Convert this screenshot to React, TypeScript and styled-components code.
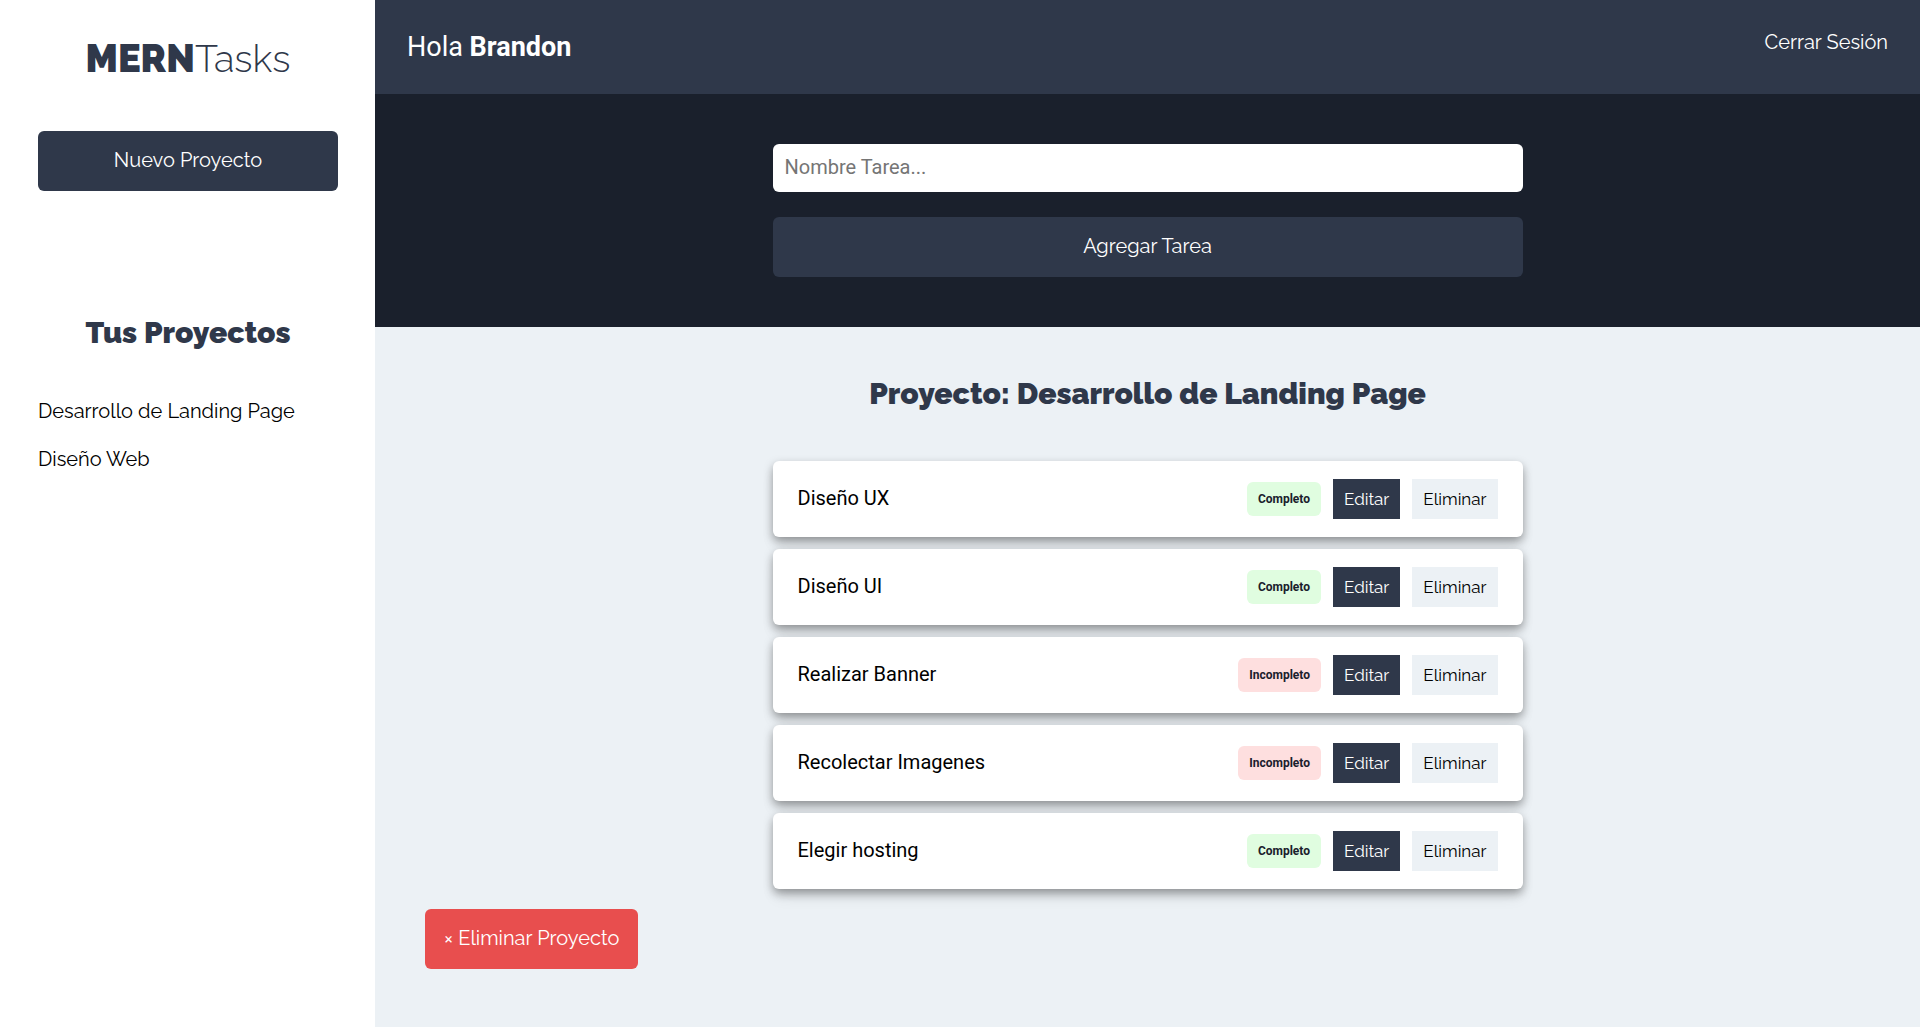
import React, { useState } from "react";
import styled, { createGlobalStyle } from "styled-components";

const ink = "#2f384a";
const night = "#1a202c";
const mist = "#ecf1f5";
const body = 'Roboto, "Liberation Sans", sans-serif';
const display = 'Raleway, Lato, "Liberation Sans", sans-serif';

const GlobalStyle = createGlobalStyle`
  *, *::before, *::after { box-sizing: border-box; }
  body { margin: 0; background: ${mist}; color: #000; font-family: ${body}; font-size: 20px; line-height: 30px; }
  h1, h2, p, ul { margin: 0; padding: 0; }
  ul { list-style: none; }
`;

const Page = styled.div`
  display: flex;
  min-height: 100vh;
`;

const Sidebar = styled.aside`
  flex: 0 0 375px;
  padding: 35px 37px 35px 38px;
  background: #fff;
`;

const Logo = styled.h1`
  margin-bottom: 48px;
  color: ${ink};
  font-family: ${display};
  font-size: 38px;
  font-weight: 300;
  line-height: 48px;
  text-align: center;
`;

const LogoStrong = styled.span`
  font-weight: 900;
`;

const Button = styled.button<{ $danger?: boolean }>`
  display: block;
  width: ${(p) => (p.$danger ? "auto" : "100%")};
  padding: 14px 19px 16px;
  border: 0;
  border-radius: 6px;
  background: ${(p) => (p.$danger ? "#e84e4e" : ink)};
  color: #fff;
  font-family: ${display};
  font-size: 20px;
  line-height: 30px;
  cursor: pointer;
`;

const Title = styled.h2`
  color: ${ink};
  font-family: ${display};
  font-size: 30px;
  font-weight: 900;
  line-height: 40px;
  text-align: center;
`;

const Projects = styled.section`
  padding-top: 122px;
`;

const ProjectList = styled.ul`
  display: grid;
  gap: 18px;
  margin-top: 43px;
`;

const ProjectButton = styled.button`
  display: block;
  padding: 0;
  border: 0;
  background: none;
  color: #000;
  font-family: ${display};
  font-size: 20px;
  line-height: 30px;
  text-align: left;
  cursor: pointer;
`;

const Main = styled.div`
  flex: 1;
  min-width: 0;
`;

const Header = styled.header`
  display: flex;
  align-items: flex-start;
  justify-content: space-between;
  padding: 27px 32px;
  background: ${ink};
  color: #fff;
`;

const Greeting = styled.p`
  font-size: 27px;
  line-height: 40px;
`;

const Logout = styled.a`
  color: #fff;
  font-family: ${display};
  font-size: 20px;
  line-height: 30px;
  text-decoration: none;
`;

const FormBand = styled.section`
  padding: 50px 32px;
  background: ${night};
`;

const TaskForm = styled.form`
  display: grid;
  gap: 25px;
  max-width: 750px;
  margin: 0 auto;
`;

const TaskInput = styled.input`
  width: 100%;
  height: 48px;
  padding: 0 12px 2px;
  border: 0;
  border-radius: 6px;
  background: #fff;
  font-family: ${body};
  font-size: 20px;
  &::placeholder { color: #757575; }
`;

const Board = styled.main`
  padding: 47px 50px 58px;
`;

const Tasks = styled.ul`
  display: grid;
  gap: 12px;
  max-width: 750px;
  margin: 47px auto 20px;
`;

const Task = styled.li`
  display: flex;
  align-items: center;
  gap: 12px;
  padding: 18px 25px;
  border-radius: 6px;
  background: #fff;
  box-shadow: 0 10px 15px -3px rgba(0, 0, 0, 0.1), 0 4px 10px rgba(0, 0, 0, 0.35);
`;

const TaskName = styled.p`
  flex: 1;
  padding-bottom: 2px;
`;

const Status = styled.button<{ $done: boolean }>`
  padding: 8px 11px;
  border: 0;
  border-radius: 6px;
  background: ${(p) => (p.$done ? "#e0fde0" : "#fedfdf")};
  color: ${night};
  font-family: ${body};
  font-size: 12px;
  font-weight: 700;
  line-height: 18px;
  cursor: pointer;
`;

const Action = styled.button<{ $primary?: boolean }>`
  padding: 5px 11px;
  border: 0;
  background: ${(p) => (p.$primary ? ink : mist)};
  color: ${(p) => (p.$primary ? "#fff" : "#000")};
  font-family: ${display};
  font-size: 17px;
  line-height: 30px;
  cursor: pointer;
`;

const projects = ["Desarrollo de Landing Page", "Diseño Web"];

const initialTasks = [
  { name: "Diseño UX", done: true },
  { name: "Diseño UI", done: true },
  { name: "Realizar Banner", done: false },
  { name: "Recolectar Imagenes", done: false },
  { name: "Elegir hosting", done: true },
];

export default function App() {
  const [tasks, setTasks] = useState(initialTasks);
  const [name, setName] = useState("");

  const addTask = (e: React.FormEvent) => {
    e.preventDefault();
    if (!name.trim()) return;
    setTasks([...tasks, { name, done: false }]);
    setName("");
  };
  const toggle = (index: number) =>
    setTasks(tasks.map((t, i) => (i === index ? { ...t, done: !t.done } : t)));
  const remove = (index: number) => setTasks(tasks.filter((_, i) => i !== index));

  return (
    <>
      <GlobalStyle />
      <Page>
        <Sidebar>
          <Logo><LogoStrong>MERN</LogoStrong>Tasks</Logo>
          <Button type="button">Nuevo Proyecto</Button>
          <Projects>
            <Title>Tus Proyectos</Title>
            <ProjectList>
              {projects.map((p) => (
                <li key={p}><ProjectButton type="button">{p}</ProjectButton></li>
              ))}
            </ProjectList>
          </Projects>
        </Sidebar>
        <Main>
          <Header>
            <Greeting>Hola <b>Brandon</b></Greeting>
            <Logout href="#">Cerrar Sesión</Logout>
          </Header>
          <FormBand>
            <TaskForm onSubmit={addTask}>
              <TaskInput
                type="text"
                aria-label="Nombre Tarea"
                placeholder="Nombre Tarea..."
                value={name}
                onChange={(e) => setName(e.target.value)}
              />
              <Button type="submit">Agregar Tarea</Button>
            </TaskForm>
          </FormBand>
          <Board>
            <Title>Proyecto: Desarrollo de Landing Page</Title>
            <Tasks>
              {tasks.map((t, i) => (
                <Task key={i}>
                  <TaskName>{t.name}</TaskName>
                  <Status type="button" $done={t.done} onClick={() => toggle(i)}>
                    {t.done ? "Completo" : "Incompleto"}
                  </Status>
                  <Action type="button" $primary>Editar</Action>
                  <Action type="button" onClick={() => remove(i)}>Eliminar</Action>
                </Task>
              ))}
            </Tasks>
            <Button type="button" $danger>× Eliminar Proyecto</Button>
          </Board>
        </Main>
      </Page>
    </>
  );
}
